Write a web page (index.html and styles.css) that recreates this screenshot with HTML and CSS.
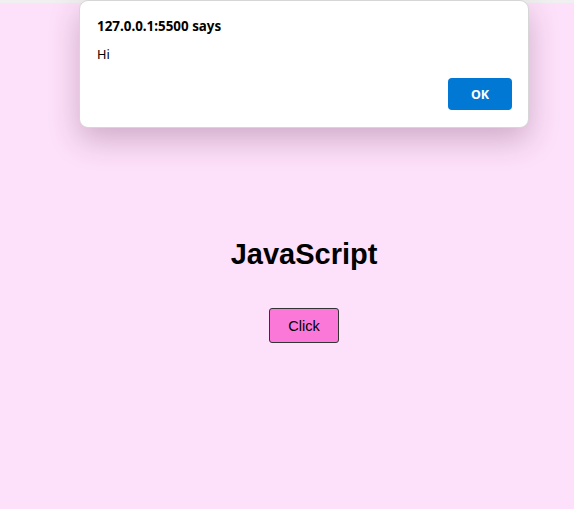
FILE: index.html
```html
<!DOCTYPE html>
<html>
<head>
<meta charset="utf-8">
<link rel="stylesheet" href="styles.css">
</head>
<body>
<div class="topstrip"></div>
<main class="page">
  <h1 class="title">JavaScript</h1>
  <button class="click-btn">Click</button>
</main>
<div class="dialog">
  <div class="dialog-title">127.0.0.1:5500 says</div>
  <div class="dialog-msg">Hi</div>
  <div class="dialog-actions">
    <button class="ok-btn">OK</button>
  </div>
</div>
</body>
</html>
```
FILE: styles.css
```css
html, body {
  margin: 0;
  padding: 0;
  height: 100%;
}
body {
  background: #fde0f9;
  font-family: "Liberation Sans", Arial, sans-serif;
  overflow: hidden;
}
.topstrip {
  height: 3px;
  background: #f0f0f0;
}
.page {
  display: flex;
  flex-direction: column;
  align-items: center;
  padding-left: 34px;
  padding-top: 233px;
}
.title {
  margin: 0;
  font-size: 29px;
  font-weight: bold;
  color: #000;
  line-height: 36px;
}
.click-btn {
  margin-top: 36px;
  width: 70px;
  height: 35px;
  background: #fb78d9;
  border: 1px solid #333;
  border-radius: 3px;
  font-family: "Liberation Sans", Arial, sans-serif;
  font-size: 14.5px;
  color: #000;
  padding: 0;
}
.dialog {
  position: absolute;
  left: 79px;
  top: 0;
  width: 450px;
  height: 128px;
  box-sizing: border-box;
  background: #fff;
  border: 1px solid #d6d6d6;
  border-radius: 9px;
  box-shadow: 0 12px 30px rgba(90, 40, 80, 0.28);
  padding: 16px 16px 16px 17px;
  display: flex;
  flex-direction: column;
  font-family: "Noto Sans", "Open Sans", sans-serif;
}
.dialog-title {
  font-size: 13.4px;
  font-weight: bold;
  color: #000;
  line-height: 19px;
}
.dialog-msg {
  margin-top: 8px;
  font-size: 12.8px;
  color: #000;
  line-height: 20px;
}
.dialog-actions {
  display: flex;
  justify-content: flex-end;
  margin-top: 14px;
}
.ok-btn {
  width: 64px;
  height: 32px;
  background: #0078d4;
  color: #fff;
  border: none;
  border-radius: 4px;
  font-family: "Noto Sans", "Open Sans", sans-serif;
  font-weight: bold;
  font-size: 12.5px;
  padding: 0;
}
```
